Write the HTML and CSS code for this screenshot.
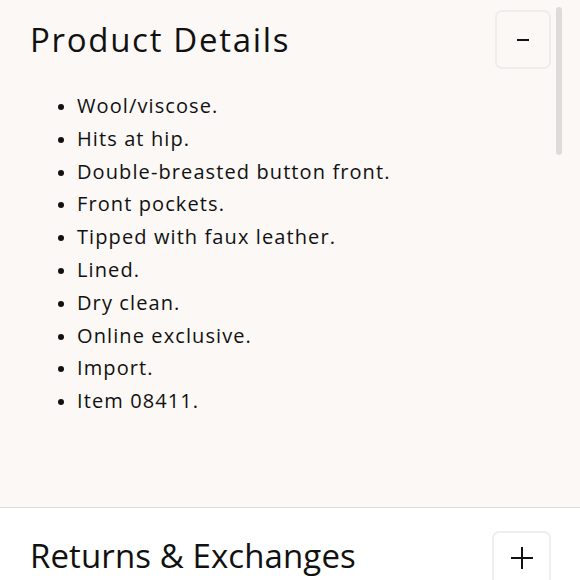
FILE: index.html
```html
<!DOCTYPE html>
<html>
<head>
<meta charset="utf-8">
<link rel="stylesheet" href="styles.css">
</head>
<body>
<div class="page">
  <section class="panel panel-open">
    <div class="panel-head">
      <h2 class="panel-title">Product Details</h2>
      <button class="toggle toggle-open"><span class="minus"></span></button>
    </div>
    <ul class="details">
      <li>Wool/viscose.</li>
      <li>Hits at hip.</li>
      <li>Double-breasted button front.</li>
      <li>Front pockets.</li>
      <li>Tipped with faux leather.</li>
      <li>Lined.</li>
      <li>Dry clean.</li>
      <li>Online exclusive.</li>
      <li>Import.</li>
      <li>Item 08411.</li>
    </ul>
  </section>
  <section class="panel panel-closed">
    <div class="panel-head">
      <h2 class="panel-title">Returns &amp; Exchanges</h2>
      <button class="toggle toggle-closed"><span class="plus"></span></button>
    </div>
  </section>
  <div class="scrollbar"></div>
</div>
</body>
</html>
```

FILE: styles.css
```css
html, body {
  margin: 0;
  padding: 0;
  background: #ffffff;
  overflow: hidden;
}
body {
  font-family: "Open Sans", "Noto Sans", sans-serif;
  color: #111;
}
.page {
  position: relative;
  width: 580px;
  height: 580px;
  overflow: hidden;
}
.panel-open {
  background: #fbf8f6;
  padding: 10px 30px 0 30px;
  box-sizing: border-box;
  border-bottom: 1px solid #dcdcdc;
  height: 508px;
}
.panel-closed {
  background: #fff;
  padding: 23px 30px 0 30px;
}
.panel-head {
  display: flex;
  align-items: center;
  justify-content: space-between;
}
.panel-title {
  margin: 0;
  font-weight: 400;
  font-size: 33px;
  line-height: 59px;
  letter-spacing: 1.7px;
}
.panel-closed .panel-title {
  margin-top: 5px;
  line-height: 40px;
  letter-spacing: 0.1px;
  align-self: flex-start;
}
.toggle {
  display: flex;
  align-items: center;
  justify-content: center;
  height: 59px;
  border: 2px solid #efedeb;
  border-radius: 7px;
  background: transparent;
  padding: 0;
  margin-right: -1px;
  box-sizing: border-box;
}
.toggle-open {
  width: 56px;
}
.toggle-closed {
  width: 59px;
  height: 60px;
  border-color: #eeeeee;
  align-self: flex-start;
  background: #fff;
}
.minus {
  display: block;
  width: 12px;
  height: 2px;
  background: #111;
}
.plus {
  position: relative;
  display: block;
  width: 22px;
  height: 22px;
  margin-bottom: 6px;
}
.plus::before, .plus::after {
  content: "";
  position: absolute;
  background: #111;
}
.plus::before {
  left: 0;
  top: 10px;
  width: 22px;
  height: 2px;
}
.plus::after {
  left: 10px;
  top: 0;
  width: 2px;
  height: 22px;
}
.details {
  margin: 21px 0 0 0;
  padding-left: 47px;
  font-size: 20px;
  line-height: 32.8px;
  letter-spacing: 1.1px;
}
.details li::marker {
  font-size: 17px;
}
.scrollbar {
  position: absolute;
  left: 556px;
  top: 7px;
  width: 6px;
  height: 148px;
  border-radius: 3px;
  background: #dedcdb;
}
```
